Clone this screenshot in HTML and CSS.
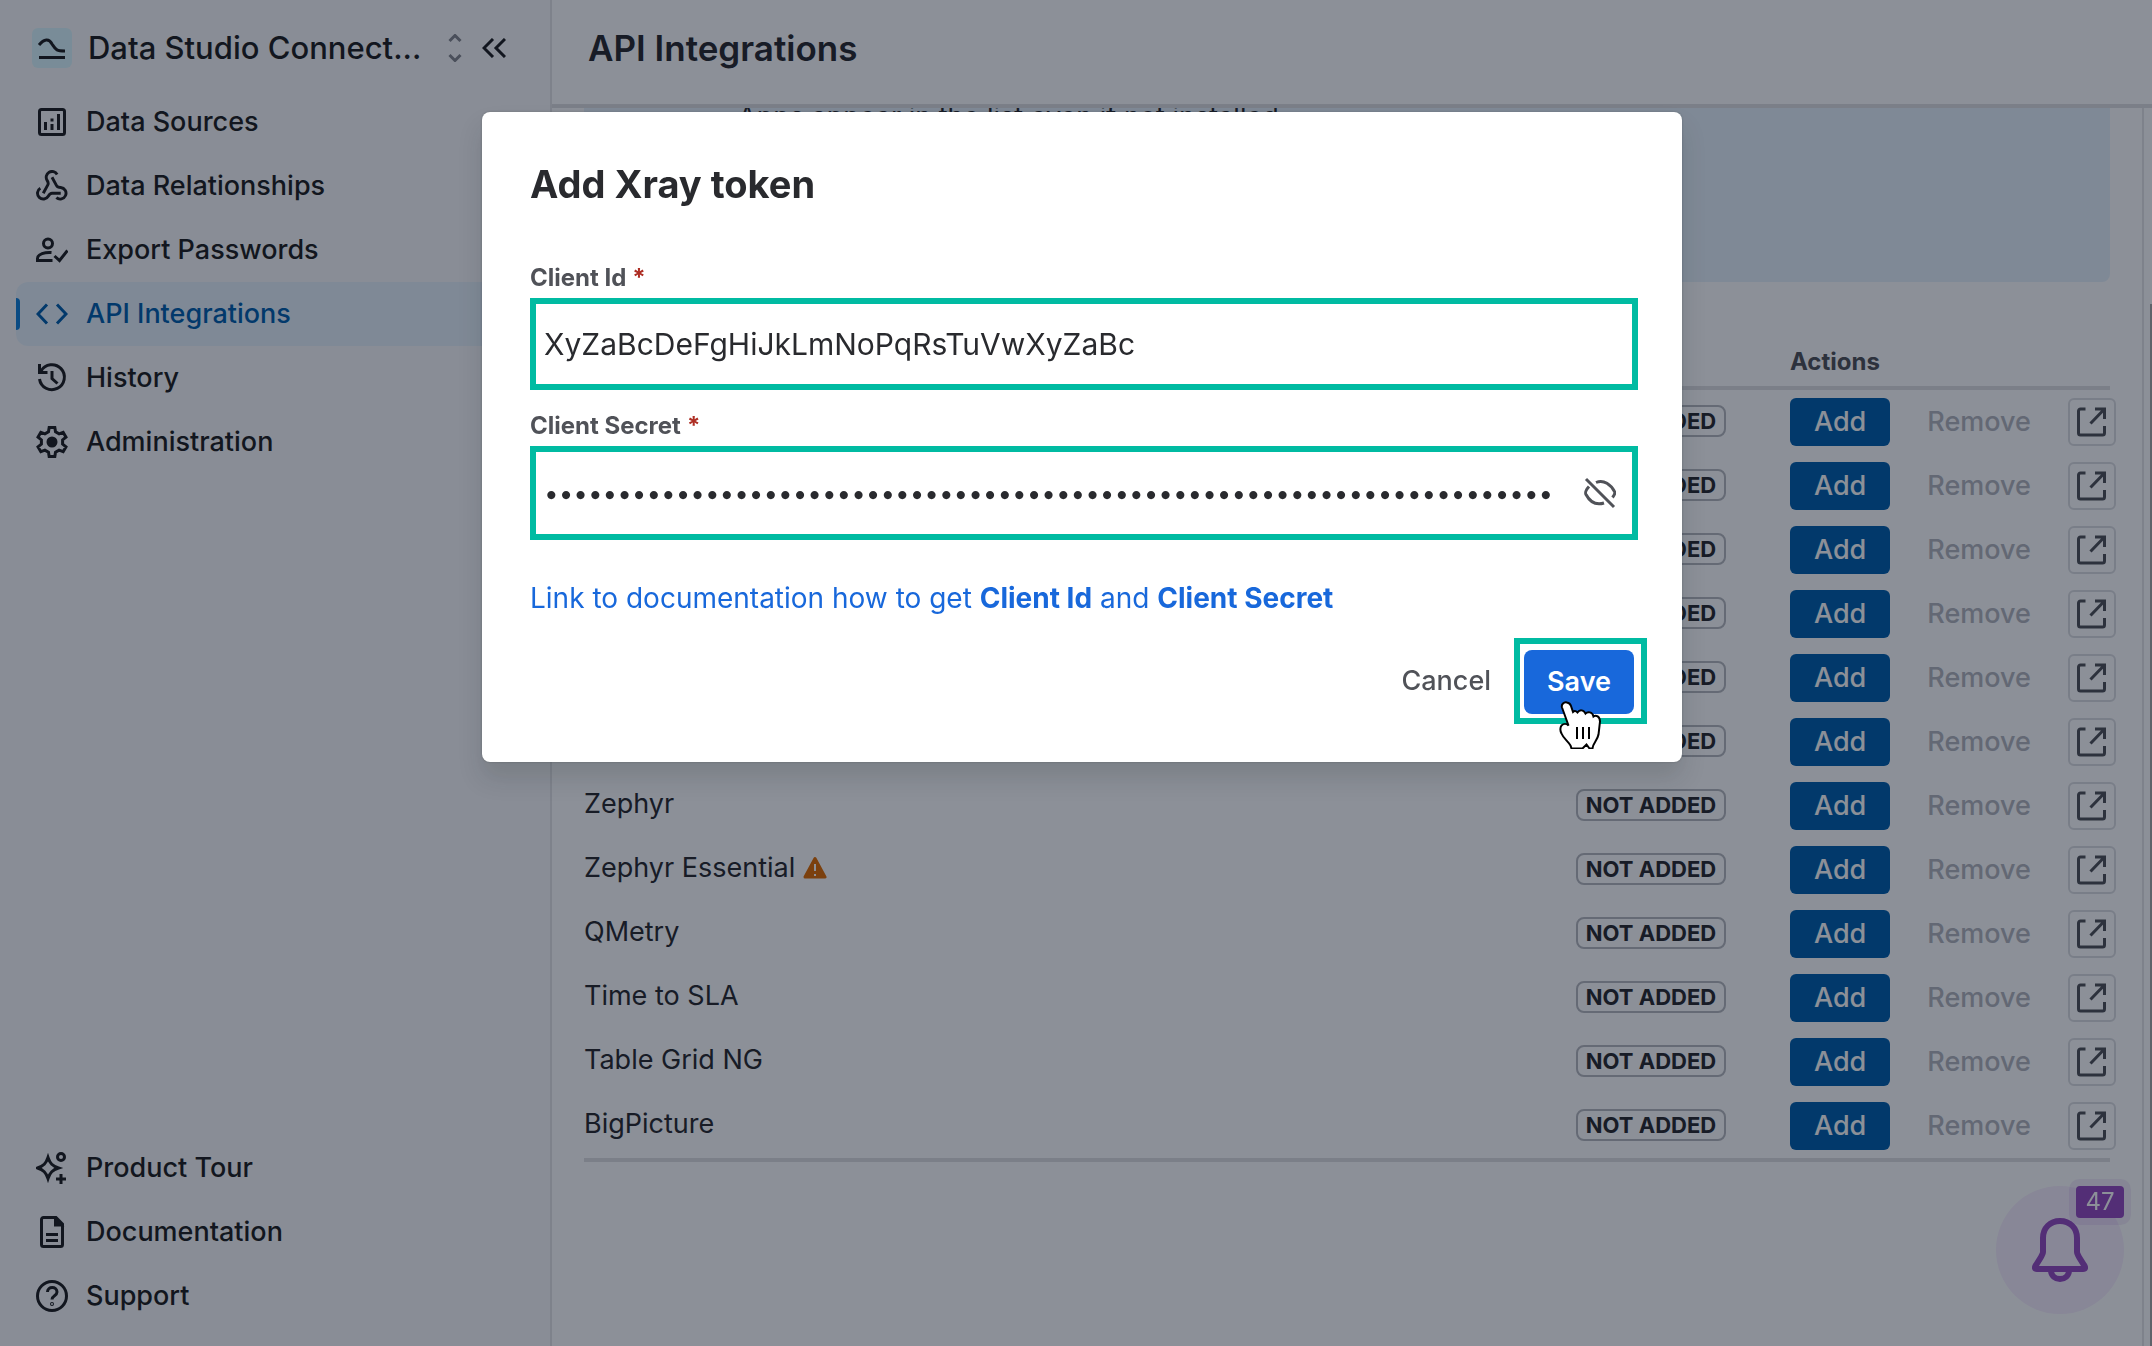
FILE: index.html
```html
<!DOCTYPE html>
<html lang="en">
<head>
    <meta charset="UTF-8">
    <meta name="viewport" content="width=device-width, initial-scale=1.0">
    <title>API Integrations</title>
    <link rel="stylesheet" href="styles.css">
</head>
<body>

<!-- Shared icons -->
<svg class="sprite" aria-hidden="true">
    <symbol id="open" viewBox="0 0 32 32">
        <path d="M9.500 3H4.500a2 2 0 0 0-2 2v22a2 2 0 0 0 2 2h22a2 2 0 0 0 2-2V20M19 3h9.500V13M28 3.500 14.500 17.500"/>
    </symbol>
</svg>

<div class="app">
    <aside class="sidebar">
        <div class="brand">
            <span class="logo">
                <svg viewBox="0 0 40 40"><path d="M7 17c5-6 10-7 13-1 4 6 4 7 13 7M7 29.500h26"/></svg>
            </span>
            <span class="brand-name">Data Studio Connect...</span>
            <button class="switcher" aria-label="Switch app">
                <svg viewBox="0 0 14 28"><path d="m1.500 7 5.500-5.500L12.500 7M1.500 21l5.500 5.500 5.500-5.500"/></svg>
            </button>
            <button class="collapse" aria-label="Collapse sidebar">
                <svg viewBox="0 0 24 20"><path d="m11 1-9 9 9 9M23 1l-9 9 9 9"/></svg>
            </button>
        </div>

        <nav class="menu">
            <a href="#">
                <svg viewBox="0 0 32 32"><rect x="3.500" y="3.500" width="25" height="25" rx="2"/><path d="M9.500 16v8M16 12.500v3M16 18v6M22.500 8v16"/></svg>
                Data Sources
            </a>
            <a href="#">
                <svg viewBox="1 1 22 22" class="webhook"><path d="M18 16.980h-5.990c-1.100 0-1.950.94-2.480 1.900A4 4 0 1 1 4 13.500"/><path d="m6 17 3.130-5.780c.53-.97.1-2.180-.5-3.100a4 4 0 1 1 6.890-4.060"/><path d="m12 6 3.130 5.730C15.660 12.700 16.900 13 18 13a4 4 0 1 1-3 7"/></svg>
                Data Relationships
            </a>
            <a href="#">
                <svg viewBox="0 0 32 32"><circle cx="12" cy="9.500" r="4.500"/><path d="M15.500 18.500C9 18 1.500 20 1.500 24.500V26.500H16.500M18.500 22l5 4.500 8-10"/></svg>
                Export Passwords
            </a>
            <a href="#" class="active">
                <svg viewBox="0 0 32 32"><path d="m11 6.500-9 9.500 9 9.500M21 6.500l9 9.500-9 9.500"/></svg>
                API Integrations
            </a>
            <a href="#">
                <svg viewBox="0 0 32 32"><path d="M3.500 2v8.500H11.500M5 9a12.500 12.500 0 1 1-1.500 8M16 9v7.500l5.500 5"/></svg>
                History
            </a>
            <a href="#">
                <svg viewBox="0 0 32 32"><path d="M12.480 5.790 13.180 1.470H18.820L19.520 5.790 23.090 7.850 27.170 6.290 29.990 11.180 26.600 13.940V18.060L29.990 20.820 27.170 25.710 23.090 24.150 19.520 26.210 18.820 30.530H13.180L12.480 26.210 8.910 24.150 4.830 25.710 2.010 20.820 5.400 18.060V13.940L2.010 11.180 4.830 6.290 8.910 7.850Z"/><circle cx="16" cy="16" r="4" class="solid"/></svg>
                Administration
            </a>
        </nav>

        <nav class="menu">
            <a href="#">
                <svg viewBox="0 0 32 32"><path d="M12 5.500c2 6 4.500 8.500 10.500 10.500-6 2-8.500 4.500-10.500 10.500-2-6-4.500-8.500-10.500-10.500 6-2 8.500-4.500 10.500-10.500ZM25 22v10M20 27h10"/><circle cx="25" cy="5" r="3.500"/></svg>
                Product Tour
            </a>
            <a href="#">
                <svg viewBox="0 0 32 32"><path d="M20 1.500H7.500a2 2 0 0 0-2 2v25a2 2 0 0 0 2 2h17a2 2 0 0 0 2-2V8ZM10 18.500h12M10 24.500h12"/><path class="solid" d="M19.500 3v6H25Z"/></svg>
                Documentation
            </a>
            <a href="#">
                <svg viewBox="0 0 32 32"><circle cx="16" cy="16" r="14.500"/><path d="M11.500 12c0-6 9.500-6 9.500 0 0 4-5 3.500-5 7.500"/><circle cx="16" cy="24" r=".5"/></svg>
                Support
            </a>
        </nav>
    </aside>

    <main class="main">
        <header class="page-header">
            <h1>API Integrations</h1>
        </header>

        <div class="page-body">
            <div class="content">
                <div class="banner">Apps appear in the list even if not installed.</div>

                <table class="apps">
                    <colgroup>
                        <col>
                        <col class="col-status">
                        <col class="col-actions">
                    </colgroup>
                    <thead>
                        <tr><th></th><th></th><th>Actions</th></tr>
                    </thead>
                    <tbody>
                        <tr>
                            <td></td>
                            <td><span class="badge">NOT ADDED</span></td>
                            <td><div class="actions"><button class="add">Add</button><button class="remove" disabled>Remove</button><button class="open" aria-label="Open"><svg><use href="#open"/></svg></button></div></td>
                        </tr>
                        <tr>
                            <td></td>
                            <td><span class="badge">NOT ADDED</span></td>
                            <td><div class="actions"><button class="add">Add</button><button class="remove" disabled>Remove</button><button class="open" aria-label="Open"><svg><use href="#open"/></svg></button></div></td>
                        </tr>
                        <tr>
                            <td></td>
                            <td><span class="badge">NOT ADDED</span></td>
                            <td><div class="actions"><button class="add">Add</button><button class="remove" disabled>Remove</button><button class="open" aria-label="Open"><svg><use href="#open"/></svg></button></div></td>
                        </tr>
                        <tr>
                            <td></td>
                            <td><span class="badge">NOT ADDED</span></td>
                            <td><div class="actions"><button class="add">Add</button><button class="remove" disabled>Remove</button><button class="open" aria-label="Open"><svg><use href="#open"/></svg></button></div></td>
                        </tr>
                        <tr>
                            <td></td>
                            <td><span class="badge">NOT ADDED</span></td>
                            <td><div class="actions"><button class="add">Add</button><button class="remove" disabled>Remove</button><button class="open" aria-label="Open"><svg><use href="#open"/></svg></button></div></td>
                        </tr>
                        <tr>
                            <td></td>
                            <td><span class="badge">NOT ADDED</span></td>
                            <td><div class="actions"><button class="add">Add</button><button class="remove" disabled>Remove</button><button class="open" aria-label="Open"><svg><use href="#open"/></svg></button></div></td>
                        </tr>
                        <tr>
                            <td>Zephyr</td>
                            <td><span class="badge">NOT ADDED</span></td>
                            <td><div class="actions"><button class="add">Add</button><button class="remove" disabled>Remove</button><button class="open" aria-label="Open"><svg><use href="#open"/></svg></button></div></td>
                        </tr>
                        <tr>
                            <td>Zephyr Essential <svg class="warning" viewBox="0 0 24 24"><path class="triangle" d="M12 2.500 22 21H2Z"/><path class="mark" d="M12 8v7M12 18v2"/></svg></td>
                            <td><span class="badge">NOT ADDED</span></td>
                            <td><div class="actions"><button class="add">Add</button><button class="remove" disabled>Remove</button><button class="open" aria-label="Open"><svg><use href="#open"/></svg></button></div></td>
                        </tr>
                        <tr>
                            <td>QMetry</td>
                            <td><span class="badge">NOT ADDED</span></td>
                            <td><div class="actions"><button class="add">Add</button><button class="remove" disabled>Remove</button><button class="open" aria-label="Open"><svg><use href="#open"/></svg></button></div></td>
                        </tr>
                        <tr>
                            <td>Time to SLA</td>
                            <td><span class="badge">NOT ADDED</span></td>
                            <td><div class="actions"><button class="add">Add</button><button class="remove" disabled>Remove</button><button class="open" aria-label="Open"><svg><use href="#open"/></svg></button></div></td>
                        </tr>
                        <tr>
                            <td>Table Grid NG</td>
                            <td><span class="badge">NOT ADDED</span></td>
                            <td><div class="actions"><button class="add">Add</button><button class="remove" disabled>Remove</button><button class="open" aria-label="Open"><svg><use href="#open"/></svg></button></div></td>
                        </tr>
                        <tr>
                            <td>BigPicture</td>
                            <td><span class="badge">NOT ADDED</span></td>
                            <td><div class="actions"><button class="add">Add</button><button class="remove" disabled>Remove</button><button class="open" aria-label="Open"><svg><use href="#open"/></svg></button></div></td>
                        </tr>
                    </tbody>
                </table>
            </div>
            <div class="scroll-thumb"></div>
        </div>
    </main>
</div>

<button class="bell" aria-label="Notifications">
    <svg viewBox="0 0 56 64"><path d="M28 3c-10 0-17 7-17 17v14c0 2-1 3-2 5l-5 8c-2 3-1 4 1 4h46c2 0 3-1 1-4l-5-8c-1-2-2-3-2-5V20c0-10-7-17-17-17ZM19 52c0 12 18 12 18 0"/></svg>
    <span class="count">47</span>
</button>

<div class="blanket">
    <form class="modal" role="dialog" aria-labelledby="modal-title">
        <h2 id="modal-title">Add Xray token</h2>

        <label for="client-id">Client Id<span class="required">*</span></label>
        <div class="field">
            <input type="text" id="client-id" value="XyZaBcDeFgHiJkLmNoPqRsTuVwXyZaBc">
        </div>

        <label for="client-secret">Client Secret<span class="required">*</span></label>
        <div class="field field-secret">
            <input type="password" id="client-secret" value="012345678901234567890123456789012345678901234567890123456789012345678">
            <button type="button" class="eye" aria-label="Show secret">
                <svg viewBox="0 0 32 32"><path d="M12 5.500C20 2 27 8 30.500 14.500c1 1.500 0 3.500-2 6M5 9.500c-4 4.500-4 6-3 8C6 25 12 28.500 20 26M2 2l28 28"/></svg>
            </button>
        </div>

        <a href="#" class="doc-link">Link to documentation how to get <b>Client Id</b> and <b>Client Secret</b></a>

        <div class="modal-footer">
            <button type="button" class="cancel">Cancel</button>
            <div class="highlight">
                <button type="button" class="save">Save</button>
                <svg class="pointer" viewBox="0 0 42 48"><path d="M8 1.500c-3-1-6 2-5 5l6.500 18c-2-2-5-2-7 0-2 3-1 6 0 8 2 5 6 7 9 12l1 3h11l4-4 3 4h3c0-5 5-8 6-14l1.500-13c0-5-4-7-6.500-5-1-5-6-5-8-3-2-4-6-4-8-1Q16 9 14 11L12 5Q11 2 8 1.500Z"/><path d="M18 26v12M24 26v12M30 26v12"/></svg>
            </div>
        </div>
    </form>
</div>

</body>
</html>
```
FILE: styles.css
```css
* {
    box-sizing: border-box;
}

body {
    margin: 0;
    font-family: Inter, "Liberation Sans", sans-serif;
    font-size: 27px;
    line-height: 40px;
    color: #292a2e;
    background-color: #fff;
}

button, input {
    font: inherit;
    color: inherit;
    border: none;
    background: none;
    padding: 0;
    margin: 0;
}

button {
    cursor: pointer;
}

a {
    text-decoration: none;
}

svg {
    fill: none;
    stroke: currentColor;
    stroke-width: 3;
}

.sprite {
    display: none;
}

.app {
    display: flex;
    height: 100vh;
    overflow: hidden;
}

/* Sidebar */
.sidebar {
    flex: 0 0 552px;
    display: flex;
    flex-direction: column;
    justify-content: space-between;
    padding: 8px 14px 18px 16px;
    background-color: #fafafb;
    border-right: 2px solid #e6e6e8;
    color: #1e1f21;
    font-weight: 500;
}

.brand {
    display: flex;
    align-items: center;
    height: 80px;
    margin-bottom: 2px;
    padding-left: 16px;
    font-size: 31px;
}

.logo {
    width: 40px;
    height: 40px;
    border-radius: 6px;
    background-color: #dcf8ff;
}

.logo svg {
    display: block;
}

.brand-name {
    margin-left: 16px;
    width: 360px;
    white-space: nowrap;
}

.switcher {
    height: 28px;
    color: #85878e;
}

.switcher svg {
    display: block;
    width: 14px;
}

.collapse {
    margin-left: 20px;
    height: 20px;
}

.collapse svg {
    display: block;
    width: 24px;
}

.menu:first-of-type {
    margin-bottom: auto;
}

.menu a {
    position: relative;
    display: flex;
    align-items: center;
    gap: 18px;
    height: 64px;
    padding-left: 20px;
    border-radius: 12px;
    color: inherit;
}

.menu svg {
    width: 32px;
    height: 32px;
}

.menu .webhook {
    stroke-width: 2;
}

.solid {
    fill: currentColor;
}

.menu .active {
    background-color: #e8f3fc;
    color: #015fad;
}

.menu .active::before {
    content: "";
    position: absolute;
    left: 0;
    top: 16px;
    width: 4px;
    height: 32px;
    border-radius: 0 4px 4px 0;
    background-color: #1080d8;
}

/* Main area */
.main {
    flex: 1;
    min-width: 0;
    display: flex;
    flex-direction: column;
}

.page-header {
    flex: 0 0 108px;
    padding: 28px 36px;
    border-bottom: 4px solid #dfdfe1;
}

.page-header h1 {
    margin: 0;
    font-size: 35px;
    font-weight: 600;
}

.page-body {
    flex: 1;
    min-height: 0;
    display: flex;
    justify-content: space-between;
}

.content {
    flex: 1;
    margin-right: 6px;
    padding: 0 32px;
    overflow: hidden;
    border-right: 2px solid #e6e6e8;
}

/* scrolled a little, the first lines are above the edge */
.banner {
    margin-top: -11px;
    padding: 0 24px 145px 154px;
    border-radius: 8px;
    background-color: #e8f3fc;
}

.scroll-thumb {
    width: 2px;
    margin-top: 196px;
    background-color: #aaa;
}

.apps {
    width: 100%;
    table-layout: fixed;
    border-spacing: 0;
}

.col-status {
    width: 214px;
}

.col-actions {
    width: 320px;
}

.apps th {
    height: 108px;
    padding: 0 0 4px;
    vertical-align: bottom;
    text-align: left;
    font-size: 24px;
    font-weight: 700;
    color: #505258;
    border-bottom: 4px solid #dfdfe1;
}

.apps td {
    height: 64px;
    padding: 8px 0;
    vertical-align: top;
    white-space: nowrap;
}

.apps tr:last-child td {
    height: 68px;
    border-bottom: 4px solid #dfdfe1;
}

.apps td:first-child {
    padding-top: 10px;
}

.badge {
    display: block;
    width: 150px;
    height: 32px;
    margin-top: 7px;
    line-height: 28px;
    text-align: center;
    font-size: 22px;
    font-weight: 700;
    border: 2px solid #b7b9be;
    border-radius: 8px;
}

.actions {
    display: flex;
    gap: 13px;
}

.actions button {
    height: 48px;
    font-weight: 500;
    border-radius: 6px;
}

.actions .add {
    padding: 0 24px;
    color: #fff;
    background-color: #015fad;
}

.actions .remove {
    padding: 0 24px;
    color: #b3b5bc;
}

.actions .open {
    flex: 0 0 48px;
    display: flex;
    align-items: center;
    justify-content: center;
    border: 2px solid #dddee1;
    color: #505258;
}

.open svg {
    width: 32px;
    height: 32px;
}

.warning {
    width: 24px;
    height: 24px;
    vertical-align: -3px;
}

.triangle {
    fill: #e06c00;
    stroke: #e06c00;
    stroke-linejoin: round;
}

.mark {
    stroke: #fff;
    stroke-width: 2;
}

/* Notification bell */
.bell {
    position: fixed;
    right: 28px;
    bottom: 32px;
    display: flex;
    align-items: center;
    justify-content: center;
    width: 128px;
    height: 128px;
    border-radius: 50%;
    color: #964ac0;
    background-color: #f8eefe;
}

.bell > svg {
    width: 56px;
    height: 64px;
    stroke-width: 6;
}

.count {
    position: absolute;
    top: 0;
    right: 0;
    width: 48px;
    height: 32px;
    line-height: 32px;
    font-size: 24px;
    color: #fff;
    border-radius: 4px;
    background-color: #964ac0;
    box-shadow: 0 0 0 7px rgba(150, 74, 192, 0.1);
}

/* Modal */
.blanket {
    position: fixed;
    inset: 0;
    display: flex;
    justify-content: center;
    align-items: flex-start;
    padding: 112px 0 0 12px;
    background-color: rgba(5, 12, 31, 0.46);
}

.modal {
    width: 1200px;
    padding: 48px 44px 48px 48px;
    border-radius: 8px;
    background-color: #fff;
    box-shadow: 0 16px 24px rgba(30, 31, 33, 0.15), 0 0 2px rgba(30, 31, 33, 0.31);
}

.modal h2 {
    margin: 0 0 54px;
    font-size: 38px;
    line-height: 48px;
    font-weight: 700;
}

.modal label {
    display: block;
    line-height: 32px;
    margin-bottom: 4px;
    font-size: 24px;
    font-weight: 700;
    color: #505258;
}

.required {
    margin-left: 6px;
    color: #ae2e24;
}

.field {
    display: flex;
    align-items: center;
    height: 92px;
    margin-bottom: 20px;
    padding: 0 16px 0 8px;
    border: 6px solid #00bba2;
}

.field-secret {
    height: 94px;
}

.field input {
    flex: 1;
    min-width: 0;
    height: 48px;
    font-size: 30px;
    outline: none;
}

.field input[type="password"] {
    font-size: 26px;
}

.eye {
    margin-left: 24px;
    height: 32px;
    color: #505258;
}

.eye svg {
    display: block;
    width: 32px;
}

.doc-link {
    display: block;
    margin-top: 38px;
    font-size: 28px;
    color: #1868db;
}

.modal-footer {
    display: flex;
    align-items: center;
    justify-content: flex-end;
    margin: 20px -9px -10px 0;
}

.modal-footer button {
    display: block;
    height: 64px;
    padding: 0 23px;
    font-weight: 500;
    border-radius: 8px;
}

.cancel {
    color: #505258;
}

.highlight {
    position: relative;
    padding: 6px 7px 4px 4px;
    border: 6px solid #00bba2;
}

.modal-footer .save {
    font-weight: 600;
    color: #fff;
    background-color: #1868db;
}

.pointer {
    position: absolute;
    left: 39px;
    top: 57px;
    width: 42px;
    height: 48px;
    fill: #fff;
    stroke: #000;
    stroke-width: 2;
}
```
